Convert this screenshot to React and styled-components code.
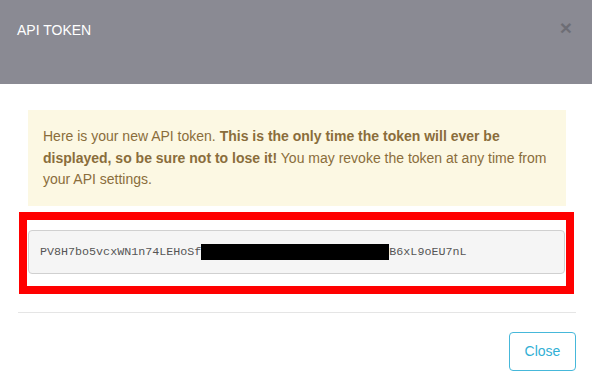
import styled, { createGlobalStyle } from "styled-components";

const GlobalStyle = createGlobalStyle`
  html, body {
    margin: 0;
    padding: 0;
    background: #fff;
  }
  body {
    font-family: "Liberation Sans", Arial, sans-serif;
    font-size: 14px;
    color: #333;
  }
`;

const Modal = styled.div`
  width: 592px;
  height: 388px;
  background: #fff;
  overflow: hidden;
`;

const Header = styled.div`
  display: flex;
  justify-content: space-between;
  align-items: flex-start;
  box-sizing: border-box;
  height: 84px;
  padding: 20px 20px 0 17px;
  background: #8a8a93;
`;

const Title = styled.h4`
  margin: 0;
  font-size: 14px;
  line-height: 20px;
  font-weight: normal;
  color: #fff;
`;

const CloseX = styled.button`
  padding: 0;
  margin-top: -3px;
  border: 0;
  background: transparent;
  font-family: "Liberation Sans", Arial, sans-serif;
  font-size: 21px;
  font-weight: bold;
  line-height: 1;
  color: #000;
  opacity: 0.2;
  cursor: pointer;
`;

const Body = styled.div`
  padding: 26px 16px 0 18px;
`;

const Alert = styled.div`
  margin: 0 10px;
  padding: 16px 15px 15px;
  background: #fcf8e3;
  color: #8a6d3b;
  font-size: 14px;
  line-height: 21.5px;

  b {
    font-weight: bold;
  }
`;

const Highlight = styled.div`
  margin: 6px 2px 0 1px;
  padding: 10px 1px 12px;
  border: 8px solid #ff0000;
`;

const TokenField = styled.div`
  display: flex;
  align-items: center;
  box-sizing: border-box;
  height: 44px;
  padding: 0 11px;
  background: #f5f5f5;
  border: 1px solid #d0d0d0;
  border-radius: 4px;
  font-family: "Liberation Mono", "DejaVu Sans Mono", monospace;
  font-size: 11.7px;
  color: #555;
  white-space: pre;
`;

const Redacted = styled.span`
  display: inline-block;
  width: 188px;
  height: 16px;
  background: #000;
`;

const Footer = styled.div`
  display: flex;
  justify-content: flex-end;
  margin-top: 18px;
  padding-top: 19px;
  border-top: 1px solid #e5e5e5;
`;

const Button = styled.button`
  box-sizing: border-box;
  width: 67px;
  height: 39px;
  padding: 0;
  background: #fff;
  border: 1px solid #46b8da;
  border-radius: 4px;
  font-family: "Liberation Sans", Arial, sans-serif;
  font-size: 14px;
  color: #31b0d5;
  cursor: pointer;
`;

export default function App() {
  return (
    <>
      <GlobalStyle />
      <Modal>
        <Header>
          <Title>API TOKEN</Title>
          <CloseX>×</CloseX>
        </Header>
        <Body>
          <Alert>
            Here is your new API token. <b>This is the only time the token will ever be displayed, so be sure not to lose it!</b> You may revoke the token at any time from your API settings.
          </Alert>
          <Highlight>
            <TokenField>
              PV8H7bo5vcxWN1n74LEHoSf<Redacted />B6xL9oEU7nL
            </TokenField>
          </Highlight>
          <Footer>
            <Button>Close</Button>
          </Footer>
        </Body>
      </Modal>
    </>
  );
}
